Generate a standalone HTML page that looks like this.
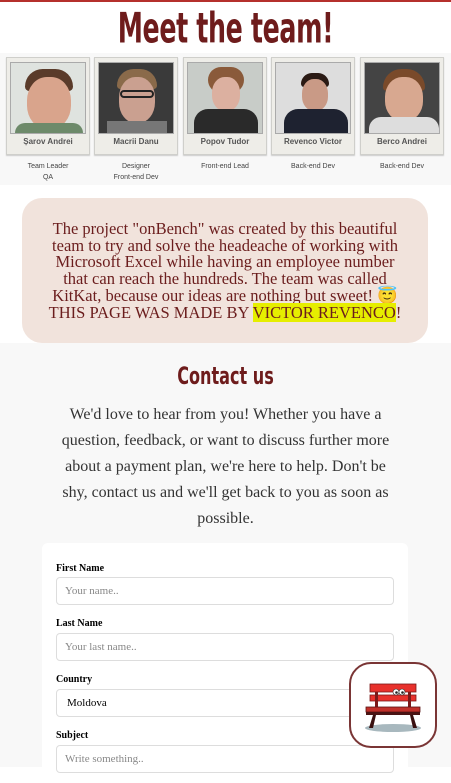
<!DOCTYPE html>
<html><head><meta charset="utf-8"><style>
*{margin:0;padding:0;box-sizing:border-box}
body{width:451px;height:767px;overflow:hidden;background:#fff;position:relative;font-family:"Liberation Serif",serif}
.topline{position:absolute;left:0;top:0;width:451px;height:2px;background:#b5302c}
h1{position:absolute;left:0;top:4px;width:451px;text-align:center;font-family:"DejaVu Sans Condensed","Liberation Sans",sans-serif;font-weight:bold;font-size:38px;color:#6e1c1c;letter-spacing:-0.5px;transform:scale(0.74,1.1);transform-origin:center top}
.strip{position:absolute;left:0;top:53px;width:451px;height:132px;background:#f8f8f8}
.card{position:absolute;top:57px;width:84px;height:98px;background:#eeede8;border:1px solid #cfcfcb;box-shadow:0 1px 1px #ccc}
.ph{position:absolute;left:3px;top:4px;width:76px;height:72px;overflow:hidden;border:1px solid #aaa}
.nm{position:absolute;left:0;top:79px;width:100%;text-align:center;font-family:"Liberation Sans",sans-serif;font-size:8px;font-weight:bold;color:#555}
.role{position:absolute;top:161px;width:84px;text-align:center;font-family:"Liberation Sans",sans-serif;font-size:7px;line-height:11px;color:#444}
.box{position:absolute;left:22px;top:198px;width:406px;height:145px;background:#f1e3dc;border-radius:20px;text-align:center;color:#6b1d1d;font-size:16.5px;line-height:16.7px;padding:23px 25px 0}
.hl{background:#e6ee00}
.gray{position:absolute;left:0;top:343px;width:451px;height:424px;background:#f8f8f8}
h2{position:absolute;left:0;top:362px;width:451px;text-align:center;font-family:"DejaVu Sans Condensed","Liberation Sans",sans-serif;font-weight:bold;font-size:21px;color:#6e1c1c;transform:scale(0.85,1.15);transform-origin:center top}
.p{position:absolute;left:53px;top:402px;width:345px;text-align:center;font-size:16px;line-height:26px;color:#333}
.form{position:absolute;left:42px;top:543px;width:366px;height:240px;background:#fff;border-radius:6px}
.lab{position:absolute;left:56px;font-size:10px;font-weight:bold;color:#000}
.inp{position:absolute;left:56px;width:338px;height:28px;border:1px solid #ddd;border-radius:4px;background:#fff;font-size:11px;color:#888;padding:7px 8px}
.bench{position:absolute;left:349px;top:662px;width:88px;height:86px;border:2px solid #7a3535;border-radius:22px;background:#fff}
</style></head><body>
<div class="topline"></div>
<h1>Meet the team!</h1>
<div class="strip"></div>

<div class="card" style="left:6px"><div class="ph" style="background:#dfe3df"><div style="position:absolute;left:14px;top:6px;width:48px;height:22px;background:#5a3b2a;border-radius:24px 24px 6px 6px"></div><div style="position:absolute;left:16px;top:14px;width:44px;height:52px;background:#d9a48c;border-radius:45%"></div><div style="position:absolute;left:4px;top:60px;width:68px;height:14px;background:#6d8a6a;border-radius:10px 10px 0 0"></div></div><div class="nm">Șarov Andrei</div></div>
<div class="card" style="left:94px"><div class="ph" style="background:#3a3a3a"><div style="position:absolute;left:18px;top:6px;width:40px;height:20px;background:#8a6a4a;border-radius:20px 20px 4px 4px"></div><div style="position:absolute;left:20px;top:14px;width:36px;height:46px;background:#caa090;border-radius:45%"></div><div style="position:absolute;left:21px;top:27px;width:34px;height:8px;border:2px solid #222;border-radius:4px"></div><div style="position:absolute;left:8px;top:58px;width:60px;height:16px;background:#777"></div></div><div class="nm">Macrii Danu</div></div>
<div class="card" style="left:183px"><div class="ph" style="background:#c8ccc8"><div style="position:absolute;left:20px;top:4px;width:36px;height:26px;background:#8a5a3a;border-radius:18px"></div><div style="position:absolute;left:24px;top:14px;width:28px;height:34px;background:#dcb0a0;border-radius:45%"></div><div style="position:absolute;left:6px;top:46px;width:64px;height:28px;background:#2a2a2a;border-radius:14px 14px 0 0"></div></div><div class="nm">Popov Tudor</div></div>
<div class="card" style="left:271px"><div class="ph" style="background:#ddd"><div style="position:absolute;left:25px;top:10px;width:28px;height:14px;background:#2a1a14;border-radius:14px 14px 4px 4px"></div><div style="position:absolute;left:26px;top:16px;width:26px;height:32px;background:#c99a86;border-radius:45%"></div><div style="position:absolute;left:8px;top:46px;width:64px;height:28px;background:#1e2230;border-radius:14px 14px 0 0"></div></div><div class="nm">Revenco Victor</div></div>
<div class="card" style="left:360px"><div class="ph" style="background:#444"><div style="position:absolute;left:18px;top:6px;width:42px;height:22px;background:#7a4a2a;border-radius:20px 20px 4px 4px"></div><div style="position:absolute;left:20px;top:14px;width:38px;height:44px;background:#d8a890;border-radius:45%"></div><div style="position:absolute;left:4px;top:54px;width:70px;height:20px;background:#ddd;border-radius:12px 12px 0 0"></div></div><div class="nm">Berco Andrei</div></div>

<div class="role" style="left:6px">Team Leader<br>QA</div>
<div class="role" style="left:94px">Designer<br>Front-end Dev</div>
<div class="role" style="left:183px">Front-end Lead</div>
<div class="role" style="left:271px">Back-end Dev</div>
<div class="role" style="left:360px">Back-end Dev</div>

<div class="box">The project "onBench" was created by this beautiful team to try and solve the headeache of working with Microsoft Excel while having an employee number that can reach the hundreds. The team was called KitKat, because our ideas are nothing but sweet! 😇 THIS PAGE WAS MADE BY <span class="hl">VICTOR REVENCO</span>!</div>

<div class="gray"></div>
<h2>Contact us</h2>
<div class="p">We'd love to hear from you! Whether you have a question, feedback, or want to discuss further more about a payment plan, we're here to help. Don't be shy, contact us and we'll get back to you as soon as possible.</div>
<div class="form"></div>
<div class="lab" style="top:563px">First Name</div>
<div class="inp" style="top:577px">Your name..</div>
<div class="lab" style="top:618px">Last Name</div>
<div class="inp" style="top:633px">Your last name..</div>
<div class="lab" style="top:674px">Country</div>
<div class="inp" style="top:689px;color:#000;padding-left:10px">Moldova</div>
<div class="lab" style="top:730px">Subject</div>
<div class="inp" style="top:745px">Write something..</div>

<div class="bench">
<svg width="84" height="82" viewBox="0 0 84 82">
<ellipse cx="42" cy="64" rx="28" ry="4" fill="#a8b8be"/>
<rect x="19" y="20" width="46" height="8" fill="#e8312c" stroke="#7a1a1a" stroke-width="0.8"/>
<rect x="19" y="31" width="46" height="6" fill="#e8312c" stroke="#7a1a1a" stroke-width="0.8"/>
<rect x="24" y="28" width="3" height="15" fill="#7a1a1a"/><rect x="57" y="28" width="3" height="15" fill="#7a1a1a"/>
<rect x="15" y="43" width="54" height="5" fill="#c0302a" stroke="#5a1414" stroke-width="0.8"/>
<rect x="15" y="48" width="54" height="3" fill="#4a1414"/>
<path d="M22 51 L18 64 L22 64 L25 51Z M62 51 L66 64 L62 64 L59 51Z" fill="#3a1010"/>
<circle cx="45" cy="28" r="3" fill="#fff" stroke="#333" stroke-width="0.6"/><circle cx="51" cy="28" r="3" fill="#fff" stroke="#333" stroke-width="0.6"/>
<circle cx="45.5" cy="28.5" r="1.3" fill="#222"/><circle cx="51.5" cy="28.5" r="1.3" fill="#222"/>
</svg>
</div>
</body></html>
